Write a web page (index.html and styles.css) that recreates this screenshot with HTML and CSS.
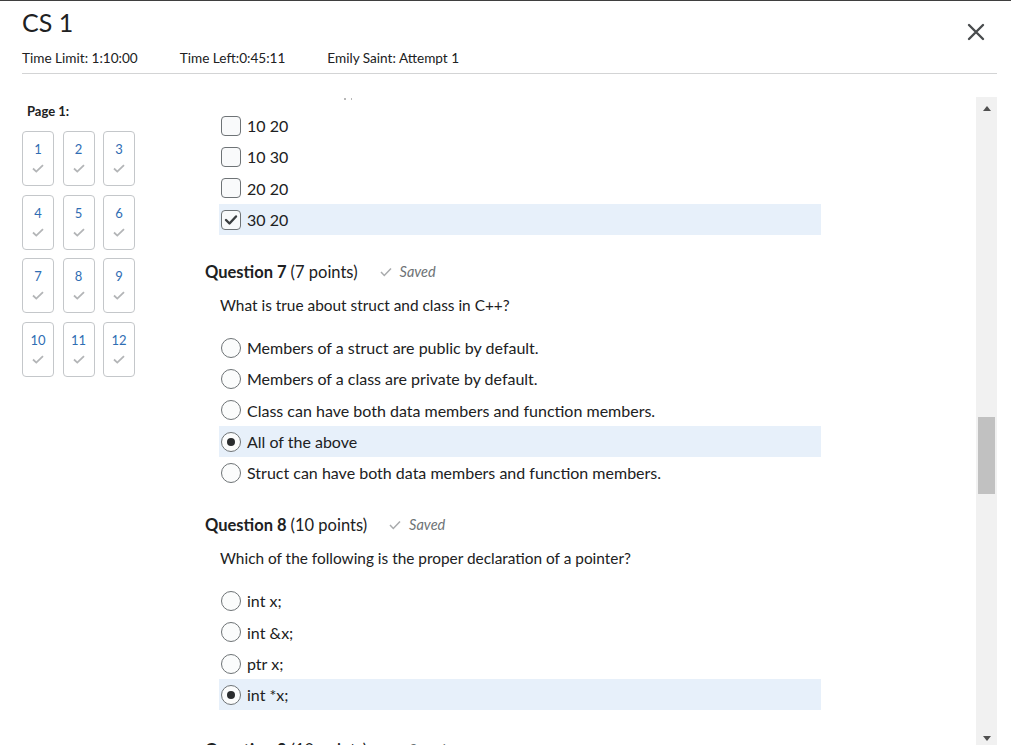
FILE: index.html
```html
<!DOCTYPE html>
<html lang="en">
<head>
<meta charset="utf-8">
<title>CS 1</title>
<link rel="stylesheet" href="styles.css">
</head>
<body>
<div class="page">
  <header class="top">
    <div class="title-row">
      <h1 class="title">CS 1</h1>
      <button class="close" aria-label="Close">
        <svg width="18" height="18" viewBox="0 0 18 18"><path d="M2 2 L16 16 M16 2 L2 16" stroke="#494c4e" stroke-width="2.4" stroke-linecap="round" fill="none"/></svg>
      </button>
    </div>
    <div class="meta">
      <span>Time Limit: 1:10:00</span>
      <span>Time Left:0:45:11</span>
      <span>Emily Saint: Attempt 1</span>
    </div>
  </header>

  <div class="body">
    <nav class="sidebar">
      <div class="page-label">Page 1:</div>
      <div class="qgrid">
        <a class="qbox"><span class="qnum">1</span><svg class="qcheck" width="12" height="9" viewBox="0 0 12 9"><path d="M1 4.5 L4.3 7.6 L11 1.2" stroke="#b3b5b7" stroke-width="1.8" fill="none"/></svg></a>
        <a class="qbox"><span class="qnum">2</span><svg class="qcheck" width="12" height="9" viewBox="0 0 12 9"><path d="M1 4.5 L4.3 7.6 L11 1.2" stroke="#b3b5b7" stroke-width="1.8" fill="none"/></svg></a>
        <a class="qbox"><span class="qnum">3</span><svg class="qcheck" width="12" height="9" viewBox="0 0 12 9"><path d="M1 4.5 L4.3 7.6 L11 1.2" stroke="#b3b5b7" stroke-width="1.8" fill="none"/></svg></a>
        <a class="qbox"><span class="qnum">4</span><svg class="qcheck" width="12" height="9" viewBox="0 0 12 9"><path d="M1 4.5 L4.3 7.6 L11 1.2" stroke="#b3b5b7" stroke-width="1.8" fill="none"/></svg></a>
        <a class="qbox"><span class="qnum">5</span><svg class="qcheck" width="12" height="9" viewBox="0 0 12 9"><path d="M1 4.5 L4.3 7.6 L11 1.2" stroke="#b3b5b7" stroke-width="1.8" fill="none"/></svg></a>
        <a class="qbox"><span class="qnum">6</span><svg class="qcheck" width="12" height="9" viewBox="0 0 12 9"><path d="M1 4.5 L4.3 7.6 L11 1.2" stroke="#b3b5b7" stroke-width="1.8" fill="none"/></svg></a>
        <a class="qbox"><span class="qnum">7</span><svg class="qcheck" width="12" height="9" viewBox="0 0 12 9"><path d="M1 4.5 L4.3 7.6 L11 1.2" stroke="#b3b5b7" stroke-width="1.8" fill="none"/></svg></a>
        <a class="qbox"><span class="qnum">8</span><svg class="qcheck" width="12" height="9" viewBox="0 0 12 9"><path d="M1 4.5 L4.3 7.6 L11 1.2" stroke="#b3b5b7" stroke-width="1.8" fill="none"/></svg></a>
        <a class="qbox"><span class="qnum">9</span><svg class="qcheck" width="12" height="9" viewBox="0 0 12 9"><path d="M1 4.5 L4.3 7.6 L11 1.2" stroke="#b3b5b7" stroke-width="1.8" fill="none"/></svg></a>
        <a class="qbox"><span class="qnum">10</span><svg class="qcheck" width="12" height="9" viewBox="0 0 12 9"><path d="M1 4.5 L4.3 7.6 L11 1.2" stroke="#b3b5b7" stroke-width="1.8" fill="none"/></svg></a>
        <a class="qbox"><span class="qnum">11</span><svg class="qcheck" width="12" height="9" viewBox="0 0 12 9"><path d="M1 4.5 L4.3 7.6 L11 1.2" stroke="#b3b5b7" stroke-width="1.8" fill="none"/></svg></a>
        <a class="qbox"><span class="qnum">12</span><svg class="qcheck" width="12" height="9" viewBox="0 0 12 9"><path d="M1 4.5 L4.3 7.6 L11 1.2" stroke="#b3b5b7" stroke-width="1.8" fill="none"/></svg></a>
      </div>
    </nav>

    <main class="main">
      <div class="clip-dots"><span class="dot"></span><span class="dot"></span></div>
      <div class="options">
        <div class="opt"><span class="cb"></span><span>10 20</span></div>
        <div class="opt"><span class="cb"></span><span>10 30</span></div>
        <div class="opt"><span class="cb"></span><span>20 20</span></div>
        <div class="opt selected"><span class="cb checked"><svg width="14" height="12" viewBox="0 0 14 12"><path d="M2 6 L5.5 9.5 L12 2.5" stroke="#3b3e40" stroke-width="2.4" fill="none" stroke-linecap="round" stroke-linejoin="round"/></svg></span><span>30 20</span></div>
      </div>

      <section class="question">
        <div class="q-head"><b>Question 7</b> (7 points)<span class="saved"><svg width="12" height="10" viewBox="0 0 12 10"><path d="M1 5 L4.3 8.4 L11 1.4" stroke="#a9abad" stroke-width="1.5" fill="none"/></svg><i>Saved</i></span></div>
        <div class="q-text">What is true about struct and class in C++?</div>
        <div class="options">
          <div class="opt"><span class="rb"></span><span>Members of a struct are public by default.</span></div>
          <div class="opt"><span class="rb"></span><span>Members of a class are private by default.</span></div>
          <div class="opt"><span class="rb"></span><span>Class can have both data members and function members.</span></div>
          <div class="opt selected"><span class="rb on"></span><span>All of the above</span></div>
          <div class="opt"><span class="rb"></span><span>Struct can have both data members and function members.</span></div>
        </div>
      </section>

      <section class="question">
        <div class="q-head"><b>Question 8</b> (10 points)<span class="saved"><svg width="12" height="10" viewBox="0 0 12 10"><path d="M1 5 L4.3 8.4 L11 1.4" stroke="#a9abad" stroke-width="1.5" fill="none"/></svg><i>Saved</i></span></div>
        <div class="q-text">Which of the following is the proper declaration of a pointer?</div>
        <div class="options">
          <div class="opt"><span class="rb"></span><span>int x;</span></div>
          <div class="opt"><span class="rb"></span><span>int &amp;x;</span></div>
          <div class="opt"><span class="rb"></span><span>ptr x;</span></div>
          <div class="opt selected"><span class="rb on"></span><span>int *x;</span></div>
        </div>
      </section>

      <section class="question last">
        <div class="q-head"><b>Question 9</b> (10 points)<span class="saved"><svg width="12" height="10" viewBox="0 0 12 10"><path d="M1 5 L4.3 8.4 L11 1.4" stroke="#a9abad" stroke-width="1.5" fill="none"/></svg><i>Saved</i></span></div>
      </section>
    </main>

    <div class="scrollbar">
      <span class="arrow up"></span>
      <div class="track"><div class="thumb"></div></div>
      <span class="arrow down"></span>
    </div>
  </div>
</div>
</body>
</html>
```

FILE: styles.css
```css
* { box-sizing: border-box; }
html, body { margin: 0; padding: 0; }
body {
  font-family: Lato, "Open Sans", Arial, sans-serif;
  color: #202122;
  background: #fff;
  border-top: 1px solid #3f3f3f;
}
.page {
  height: 744px;
  display: flex;
  flex-direction: column;
  overflow: hidden;
}
.top {
  margin: 0 14px 0 22px;
  border-bottom: 1px solid #d3d4d5;
  height: 73px;
}
.title-row {
  display: flex;
  justify-content: space-between;
  align-items: flex-start;
}
.title {
  margin: 7px 0 0 0;
  font-size: 25px;
  font-weight: 400;
  line-height: 29px;
  color: #202122;
}
.close {
  background: none;
  border: 0;
  padding: 0;
  margin: 22px 12px 0 0;
  width: 18px;
  height: 18px;
  cursor: pointer;
}
.close svg { display: block; }
.meta {
  display: flex;
  gap: 42px;
  margin-top: 9px;
  font-size: 13.6px;
  line-height: 16px;
  color: #202122;
}
.body {
  flex: 1;
  display: flex;
  padding-top: 23px;
  min-height: 0;
}
.sidebar {
  width: 205px;
  padding-left: 22px;
  flex: none;
}
.page-label {
  font-size: 13px;
  font-weight: 700;
  line-height: 16px;
  margin: 6px 0 0 5px;
}
.qgrid {
  display: grid;
  grid-template-columns: repeat(3, 32px);
  grid-auto-rows: 55px;
  column-gap: 8.5px;
  row-gap: 8.5px;
  margin-top: 12px;
}
.qbox {
  border: 1px solid #c4c7ca;
  border-radius: 4px;
  display: flex;
  flex-direction: column;
  align-items: center;
  padding-top: 9px;
}
.qnum {
  font-size: 13px;
  line-height: 16px;
  color: #2f6db3;
}
.qcheck { margin-top: 7px; display: block; }

.main {
  flex: 1;
  min-width: 0;
  overflow: hidden;
}
.clip-dots {
  height: 13px;
  margin-left: 139px;
  padding-top: 1px;
  display: flex;
  gap: 5px;
}
.dot {
  width: 1.5px;
  height: 1.5px;
  background: #b8b8b8;
}
.options {
  margin-left: 14px;
  width: 602px;
}
.opt {
  height: 31.3px;
  display: flex;
  align-items: center;
  padding-left: 2px;
  font-size: 16px;
  color: #202122;
}
.opt.selected { background: #e7f0fa; }
.cb {
  width: 20px;
  height: 20px;
  border: 1px solid #6e7376;
  border-radius: 4px;
  background: #f9fafb;
  margin-right: 6px;
  flex: none;
  display: flex;
  align-items: center;
  justify-content: center;
}
.cb svg { display: block; }
.rb {
  width: 20px;
  height: 20px;
  border: 1px solid #6e7376;
  border-radius: 50%;
  background: #fbfcfc;
  margin-right: 6px;
  flex: none;
  display: flex;
  align-items: center;
  justify-content: center;
}
.rb.on::after {
  content: "";
  width: 8px;
  height: 8px;
  border-radius: 50%;
  background: #2a2c2e;
}
.question { margin-top: 25px; }
.question.last { margin-top: 28px; }
.q-head {
  font-size: 16.5px;
  line-height: 24px;
  display: flex;
  align-items: center;
  white-space: nowrap;
}
.q-head b { font-weight: 700; margin-right: 4px; }
.saved {
  display: inline-flex;
  align-items: center;
  margin-left: 22px;
  font-size: 14.5px;
  color: #6e7376;
}
.saved svg { margin-right: 8px; display: block; }
.q-text {
  margin: 8.5px 0 0 15px;
  font-size: 15.4px;
  line-height: 24px;
}
.q-text + .options { margin-top: 15.3px; }

.scrollbar {
  width: 21px;
  margin-right: 14px;
  background: #f1f1f1;
  flex: none;
  display: flex;
  flex-direction: column;
  align-items: center;
}
.arrow {
  width: 0;
  height: 0;
  border-left: 4px solid transparent;
  border-right: 4px solid transparent;
  flex: none;
}
.arrow.up { border-bottom: 5px solid #505050; margin-top: 9px; }
.arrow.down { border-top: 5px solid #505050; margin-bottom: 4px; }
.track {
  flex: 1;
  width: 100%;
  padding-top: 306px;
}
.thumb {
  width: 17px;
  height: 77px;
  margin: 0 auto;
  background: #c1c1c1;
}
```
